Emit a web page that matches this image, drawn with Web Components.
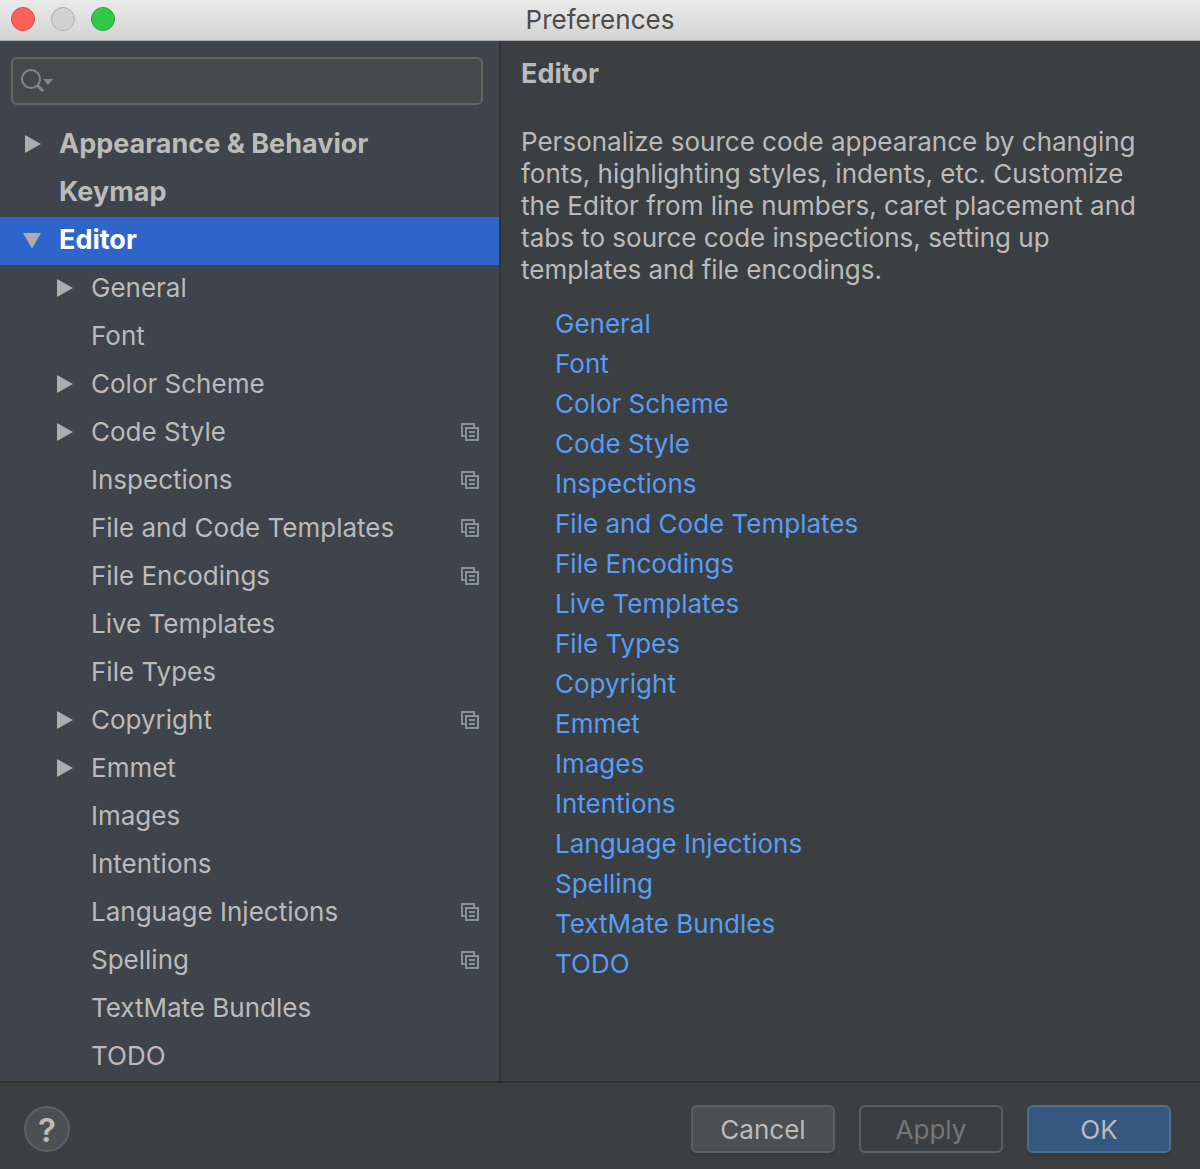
<!DOCTYPE html>
<html lang="en">
<head>
<meta charset="utf-8">
<title>Preferences</title>
<style>
  html, body { margin: 0; }
  body {
    min-height: 100vh;
    display: flex;
    background: #3c3f41;
    color: #bbbbbb;
    font-family: Inter, "Liberation Sans", sans-serif;
    font-size: 26px;
    line-height: 32px;
  }
</style>
</head>
<body>
<prefs-window heading="Preferences">
  <prefs-sidebar slot="sidebar">
    <search-field slot="search"></search-field>
    <tree-item strong expandable>Appearance &amp; Behavior</tree-item>
    <tree-item strong>Keymap</tree-item>
    <tree-item strong expandable open selected>Editor</tree-item>
    <tree-item nested expandable>General</tree-item>
    <tree-item nested>Font</tree-item>
    <tree-item nested expandable>Color Scheme</tree-item>
    <tree-item nested expandable project>Code Style</tree-item>
    <tree-item nested project>Inspections</tree-item>
    <tree-item nested project>File and Code Templates</tree-item>
    <tree-item nested project>File Encodings</tree-item>
    <tree-item nested>Live Templates</tree-item>
    <tree-item nested>File Types</tree-item>
    <tree-item nested expandable project>Copyright</tree-item>
    <tree-item nested expandable>Emmet</tree-item>
    <tree-item nested>Images</tree-item>
    <tree-item nested>Intentions</tree-item>
    <tree-item nested project>Language Injections</tree-item>
    <tree-item nested project>Spelling</tree-item>
    <tree-item nested>TextMate Bundles</tree-item>
    <tree-item nested>TODO</tree-item>
  </prefs-sidebar>

  <prefs-page slot="page">
    <span slot="title">Editor</span>
    <span slot="description">Personalize source code appearance by changing fonts, highlighting styles, indents, etc. Customize the Editor from line numbers, caret placement and tabs to source code inspections, setting up templates and file encodings.</span>
    <page-link href="#general">General</page-link>
    <page-link href="#font">Font</page-link>
    <page-link href="#color-scheme">Color Scheme</page-link>
    <page-link href="#code-style">Code Style</page-link>
    <page-link href="#inspections">Inspections</page-link>
    <page-link href="#file-templates">File and Code Templates</page-link>
    <page-link href="#encodings">File Encodings</page-link>
    <page-link href="#live-templates">Live Templates</page-link>
    <page-link href="#file-types">File Types</page-link>
    <page-link href="#copyright">Copyright</page-link>
    <page-link href="#emmet">Emmet</page-link>
    <page-link href="#images">Images</page-link>
    <page-link href="#intentions">Intentions</page-link>
    <page-link href="#injections">Language Injections</page-link>
    <page-link href="#spelling">Spelling</page-link>
    <page-link href="#textmate">TextMate Bundles</page-link>
    <page-link href="#todo">TODO</page-link>
  </prefs-page>

  <help-button slot="help"></help-button>
  <push-button slot="actions">Cancel</push-button>
  <push-button slot="actions" disabled>Apply</push-button>
  <push-button slot="actions" primary>OK</push-button>
</prefs-window>

<script>
  const define = (name, render) => customElements.define(name, class extends HTMLElement {
    connectedCallback() {
      if (this.shadowRoot) return;
      this.attachShadow({ mode: "open" }).innerHTML =
        `<style>*, :host { box-sizing: border-box; }</style>` + render(this);
    }
  });

  define("prefs-window", el => `
    <style>
      :host { flex: 1; display: flex; flex-direction: column; min-width: 0; }
      header {
        display: grid; grid-template-columns: 1fr auto 1fr; align-items: center;
        height: 41px; padding: 0 11px 2px; color: #4b4b4b;
        background: linear-gradient(#ebebeb, #d3d3d3);
        border-bottom: 1px solid #adadad;
      }
      .lights { display: flex; gap: 16px; }
      .lights i { width: 24px; height: 24px; border-radius: 50%; border: 1px solid; }
      .close { background: #fc605b; border-color: #e04844 !important; }
      .min { background: #d1d1d1; border-color: #b0b0b0 !important; }
      .max { background: #34c84a; border-color: #25a935 !important; }
      h1 { margin: 0; padding-top: 2px; font: inherit; }
      main { flex: 1; display: grid; grid-template-columns: minmax(0, 501fr) minmax(0, 699fr); }
      footer {
        display: flex; align-items: center; gap: 24px;
        padding: 22px 29px 16px 24px; border-top: 2px solid #323232;
      }
      .help { flex: 1; display: flex; }
    </style>
    <header>
      <div class="lights"><i class="close"></i><i class="min"></i><i class="max"></i></div>
      <h1>${el.getAttribute("heading")}</h1>
    </header>
    <main><slot name="sidebar"></slot><slot name="page"></slot></main>
    <footer><div class="help"><slot name="help"></slot></div><slot name="actions"></slot></footer>`);

  define("prefs-sidebar", () => `
    <style>
      :host { display: flex; flex-direction: column; gap: 16px; padding-top: 16px;
              background: #3f434c; border-right: 2px solid #323232; }
      .search { padding: 0 16px 0 11px; }
    </style>
    <div class="search"><slot name="search"></slot></div>
    <div role="tree"><slot></slot></div>`);

  define("search-field", () => `
    <style>
      :host { display: block; }
      label { display: flex; align-items: center; height: 48px; padding: 0 8px;
              background: #45494a; border: 2px solid #646464; border-radius: 6px; }
      svg { flex: none; }
      input { flex: 1; min-width: 0; padding: 0 8px; border: 0; outline: 0;
              background: none; color: inherit; font: inherit; }
    </style>
    <label>
      <svg width="34" height="26" viewBox="0 0 34 26" fill="none" stroke="#7d8a93" stroke-width="2">
        <circle cx="10" cy="11" r="9"/>
        <path d="M16.2 17.2 L22.3 23.3" stroke-width="3"/>
        <path d="M22 11 H32 L27 17 Z" fill="#7d8a93" stroke="none"/>
      </svg>
      <input type="text" aria-label="Search">
    </label>`);

  define("tree-item", el => {
    const has = n => el.hasAttribute(n);
    const arrow = has("open")
      ? `<path d="M-1 2 H17 L8 17.5 Z"/>`
      : `<path d="M1 0 V18 L17 9 Z"/>`;
    return `
    <style>
      :host { display: block; }
      .row { display: flex; align-items: center; height: 48px; padding: 0 20px 2px 24px; }
      :host([nested]) .row { padding-left: 56px; }
      :host([strong]) .row { font-size: 27px; font-weight: 700; }
      :host([selected]) .row { background: #2f65ca; color: #ffffff; }
      .toggle { flex: none; width: 18px; height: 18px; margin-right: 17px; padding: 0;
                border: 0; background: none; }
      svg { display: block; overflow: visible; }
      .label { flex: 1; white-space: nowrap; }
    </style>
    <div class="row" role="treeitem" aria-selected="${has("selected")}">
      ${has("expandable")
        ? `<button class="toggle" aria-label="Toggle"><svg width="18" height="18" fill="#adadad">${arrow}</svg></button>`
        : `<span class="toggle"></span>`}
      <span class="label"><slot></slot></span>
      ${has("project") ? `
      <svg width="18" height="18" fill="none" stroke="#87939a" stroke-width="2">
        <path d="M4 13 H1 V1 H13 V4"/>
        <rect x="5" y="5" width="12" height="12"/>
        <path d="M8 9 H14 M8 13 H14"/>
      </svg>` : ""}
    </div>`;
  });

  define("prefs-page", () => `
    <style>
      :host { display: block; padding: 17px 32px 16px 20px; }
      h2 { margin: 0 0 36px; font: inherit; font-size: 27px; font-weight: 700; }
      p { margin: 0 0 18px; }
      nav { display: flex; flex-direction: column; align-items: flex-start; padding-left: 34px; }
    </style>
    <h2><slot name="title"></slot></h2>
    <p><slot name="description"></slot></p>
    <nav><slot></slot></nav>`);

  define("page-link", el => `
    <style>
      :host { display: block; }
      a { display: block; line-height: 40px; color: #589df6; text-decoration: none; }
    </style>
    <a href="${el.getAttribute("href")}"><slot></slot></a>`);

  define("help-button", () => `
    <style>
      :host { display: block; }
      button { display: block; width: 46px; height: 46px; padding: 2px 0 0; border-radius: 50%;
               border: 2px solid #5e6060; background: #4c5052; color: #bbbbbb;
               font: inherit; font-size: 33px; font-weight: 600; }
    </style>
    <button>?</button>`);

  define("push-button", el => `
    <style>
      :host { display: block; }
      button { display: block; width: 144px; height: 48px; padding: 2px 0 0; border-radius: 6px;
               border: 2px solid #5e6060; background: #4c5052; color: #bbbbbb; font: inherit;
               box-shadow: 0 4px 0 #383b3d; }
      :host([primary]) button { background: #365880; border-color: #4c708c; }
      :host([disabled]) button { background: none; color: #777777; box-shadow: none; }
    </style>
    <button${el.hasAttribute("disabled") ? " disabled" : ""}><slot></slot></button>`);
</script>
</body>
</html>
